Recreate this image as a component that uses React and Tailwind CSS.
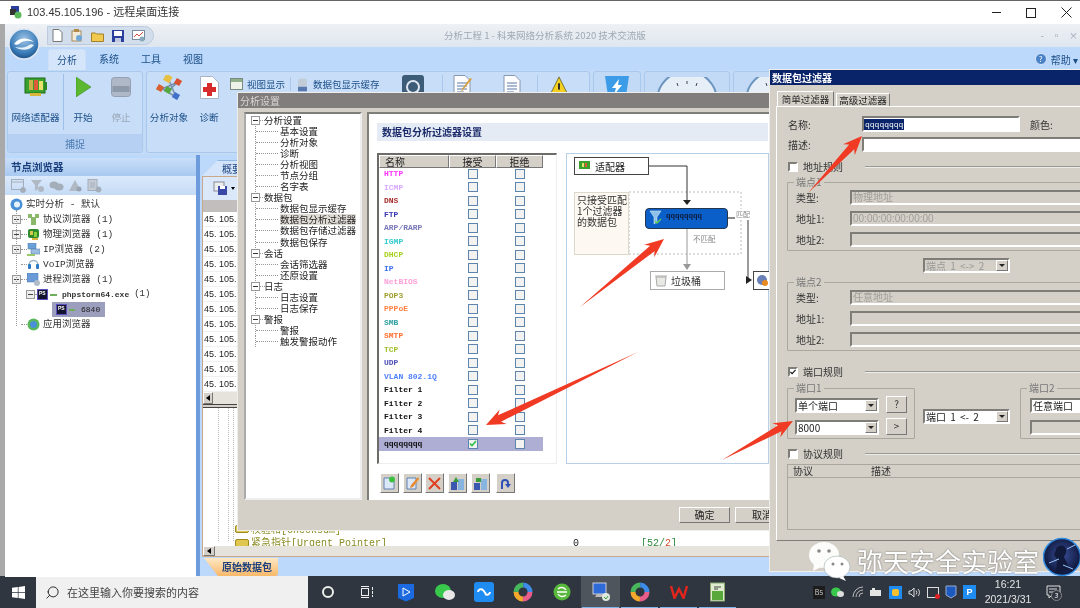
import React from "react";
import { Search } from "lucide-react";

const mono = "font-['Liberation_Mono','Noto_Sans_CJK_SC',monospace]";
const sunken = "border-2 border-t-[#7f7d78] border-l-[#7f7d78] border-b-white border-r-white";
const raised = "border border-t-white border-l-white border-b-[#777] border-r-[#777]";

function Orb() {
  return (
    <svg width="32" height="32" viewBox="0 0 32 32">
      <defs>
        <radialGradient id="orb" cx="50%" cy="35%" r="65%">
          <stop offset="0%" stopColor="#9fc4e6" />
          <stop offset="70%" stopColor="#3a7cb8" />
          <stop offset="100%" stopColor="#1d4f86" />
        </radialGradient>
      </defs>
      <circle cx="16" cy="16" r="15" fill="url(#orb)" stroke="#dfe8f2" strokeWidth="1.5" />
      <path d="M6 16c5-7 14-7 20-2-6-2-11-2-15 2-2 1-3 1-5 0z" fill="#fff" />
      <path d="M26 17c-5 6-13 6-19 2 6 1 10 1 14-2 2-1 3-1 5 0z" fill="#e8f2fb" />
    </svg>
  );
}

function QuickIcons() {
  return (
    <div className="flex items-center gap-[8px] h-[19px] w-[107px] pl-[4px] rounded-r-[10px] bg-[#d2deec] border border-[#bccbde]">
      <svg width="11" height="13" viewBox="0 0 11 13"><path d="M1 .5h6l3 3v9H1z" fill="#fff" stroke="#777" /></svg>
      <svg width="12" height="13" viewBox="0 0 12 13"><rect x="1" y="2" width="9" height="10" fill="#f2ead8" stroke="#a98a5c" /><rect x="3" y="0" width="5" height="3" fill="#b48a4a" /><circle cx="8" cy="9" r="3" fill="#6fa6d8" /></svg>
      <svg width="13" height="12" viewBox="0 0 13 12"><path d="M.5 3h4l1 1h7v7.500h-12z" fill="#f0c94e" stroke="#a4812a" /></svg>
      <svg width="12" height="12" viewBox="0 0 12 12"><rect width="12" height="12" fill="#2a3f9e" /><rect x="2" y="1" width="8" height="5" fill="#fff" /><rect x="3" y="8" width="6" height="4" fill="#c2c8e0" /></svg>
      <svg width="13" height="12" viewBox="0 0 13 12"><rect x=".5" y=".5" width="12" height="9" fill="#fff" stroke="#7a8aa0" /><path d="M2 7l3-3 2 2 4-4" stroke="#d24a3a" fill="none" /><circle cx="10" cy="9" r="2.500" fill="#8ab" /></svg>
    </div>
  );
}

function RibbonBtn({ icon, label, muted, w }) {
  return (
    <div className={`flex flex-col items-center ${w}`}>
      <div className="h-[26px] flex items-center justify-center">{icon}</div>
      <div className={`mt-[10px] text-[9.6px] leading-[14px] whitespace-nowrap ${muted ? "text-[#9aa6b4]" : "text-[#1c4f88]"}`}>{label}</div>
    </div>
  );
}

const nicIcon = (
  <svg width="24" height="21" viewBox="0 0 24 21">
    <rect x="1" y="1" width="20" height="15" fill="#3aa12c" stroke="#1f6a1a" />
    <rect x="5" y="3" width="4" height="10" fill="#c8b24a" />
    <rect x="10" y="3" width="4" height="10" fill="#e05a3a" />
    <rect x="15" y="4" width="4" height="9" fill="#e8e06a" />
    <rect x="21" y="5" width="2" height="8" fill="#2f8a26" />
    <rect x="6" y="16" width="11" height="3" fill="#d8b43a" />
  </svg>
);
const playIcon = <svg width="15" height="20" viewBox="0 0 15 20"><path d="M0 0l15 10L0 20z" fill="#5bb82f" stroke="#3d8f1e" strokeWidth=".6" /></svg>;
const stopIcon = (
  <svg width="20" height="20" viewBox="0 0 20 20">
    <rect x=".5" y=".5" width="19" height="19" rx="3" fill="#aeb8c6" stroke="#94a0b0" />
    <rect x="1.500" y="9" width="17" height="6" fill="#8d98a8" />
  </svg>
);
const nodesIcon = (
  <svg width="27" height="25" viewBox="0 0 27 25">
    <path d="M5 13L20 22M12 3L20 22M22 7L6 14M22 7L12 16" stroke="#7890a8" strokeWidth="1.500" />
    <rect x="8.500" y="0" width="7" height="7" transform="rotate(30 12 3)" fill="#e8c040" />
    <rect x="19" y="4" width="6" height="6" transform="rotate(30 22 7)" fill="#d85030" />
    <rect x="1" y="10" width="6" height="6" transform="rotate(30 4 13)" fill="#d86030" />
    <rect x="9" y="12" width="6" height="6" transform="rotate(30 12 15)" fill="#58a840" />
    <rect x="17" y="18" width="6" height="6" transform="rotate(30 20 21)" fill="#4070c8" />
  </svg>
);
const diagIcon = (
  <svg width="19" height="23" viewBox="0 0 19 23">
    <path d="M.5.5h12l6 6v16H.5z" fill="#fff" stroke="#a8b4c4" />
    <path d="M7 7h5v4h4v5h-4v4H7v-4H3v-5h4z" fill="#d82c2c" />
  </svg>
);

function MiniDoc({ pen }) {
  return (
    <svg width="22" height="22" viewBox="0 0 22 22">
      <path d="M3 .5h11l5 5v16H3z" fill="#fdfdff" stroke="#8898b0" />
      <path d="M6 8h10M6 11h10M6 14h10M6 17h7" stroke="#5878a8" />
      {pen && <path d="M21 4L12 15l-2 2 1-3 8-11z" fill="#d8a040" />}
    </svg>
  );
}

function Gauge() {
  return (
    <svg width="64" height="22" viewBox="0 0 64 22">
      <path d="M2 24A30 30 0 0 1 62 24" fill="#e6eef8" stroke="#6c96c0" strokeWidth="2" />
      <path d="M32 4v3M22 6l1 3M42 6l-1 3" stroke="#444" />
    </svg>
  );
}

function Ribbon() {
  return (
    <div className="h-[85px] flex gap-[3px] pl-[2px] pt-[1px] bg-[#c3daf7] overflow-hidden">
      <div className="w-[136px] h-[82px] shrink-0 flex flex-col rounded-[3px] border border-[#a9c8ee] bg-[#c7ddf8]">
        <div className="flex h-[62px] pt-[2px]">
          <RibbonBtn w="w-[55px]" icon={nicIcon} label="网络适配器" />
          <div className="w-px h-[56px] bg-[#9fc0e8]" />
          <RibbonBtn w="w-[38px]" icon={playIcon} label="开始" />
          <RibbonBtn w="w-[38px]" icon={stopIcon} label="停止" muted />
        </div>
        <div className="h-[18px] flex-1 bg-[#b5d0f2] text-center text-[#4a79b0] text-[10px] leading-[20px]">捕捉</div>
      </div>
      <div className="w-[444px] h-[82px] shrink-0 flex rounded-[3px] border border-[#a9c8ee] bg-[#c7ddf8] pt-[2px]">
        <RibbonBtn w="w-[44px] shrink-0" icon={nodesIcon} label="分析对象" />
        <RibbonBtn w="w-[36px] shrink-0" icon={diagIcon} label="诊断" />
        <div className="flex items-start ml-[3px] mt-[3px] text-[#1c4f88] text-[9.5px] leading-[14px]">
          <svg className="mt-px" width="13" height="12" viewBox="0 0 13 12"><rect x=".5" y=".5" width="12" height="11" fill="#eef3ea" stroke="#7a8a80" /><rect x="1" y="1" width="11" height="3" fill="#8fb08a" /></svg>
          <span className="ml-[4px] w-[40px] whitespace-nowrap">视图显示</span>
          <div className="ml-[3px] w-px h-[14px] bg-[#aac8ec]" />
          <svg className="ml-[7px] mt-px" width="9" height="14" viewBox="0 0 10 14"><rect width="10" height="14" rx="2" fill="#c0ccd8" /><rect y="9" width="10" height="5" fill="#5878b0" /></svg>
          <span className="ml-[6px] w-[71px] whitespace-nowrap">数据包显示缓存</span>
        </div>
        <div className="ml-[18px] mt-[1px] flex gap-[18px]">
          <div className="w-[22px] h-[24px] rounded-[3px] bg-[#3c5c78] flex justify-center pt-[5px]"><div className="w-[14px] h-[14px] rounded-full border-2 border-[#dfe8f2]" /></div>
          <div className="flex gap-[28px] pl-[8px] border-l border-[#a9c8ee]"><MiniDoc pen /><MiniDoc /></div>
          <div className="-ml-[4px] pl-[11px] border-l border-[#a9c8ee]">
            <svg width="20" height="22" viewBox="0 0 22 22"><path d="M11 1l10 20H1z" fill="#f4d020" stroke="#6a6a30" /><rect x="10" y="8" width="2" height="7" fill="#222" /></svg>
          </div>
        </div>
      </div>
      <div className="w-[48px] h-[82px] shrink-0 rounded-[3px] border border-[#a9c8ee] flex justify-center pt-[3px]">
        <svg width="26" height="24" viewBox="0 0 26 24"><path d="M1 1h24l-3 20-9 3-9-3z" fill="#3c9ce8" /><path d="M15 4l-7 9h4l-2 7 8-10h-4z" fill="#fff" /></svg>
      </div>
      <div className="w-[86px] h-[82px] shrink-0 rounded-[3px] border border-[#a9c8ee] flex justify-center pt-[5px]"><Gauge /></div>
      <div className="w-[86px] h-[82px] shrink-0 rounded-[3px] border border-[#a9c8ee] flex justify-center pt-[5px]"><Gauge /></div>
    </div>
  );
}

const treeIcons = {
  proto: <svg className="shrink-0" width="13" height="13" viewBox="0 0 13 13"><path d="M1 1h4v3h3V1h4v4H9v7H4V5H1z" fill="#8ab86a" /></svg>,
  phys: <svg className="shrink-0" width="13" height="13" viewBox="0 0 13 13"><rect x="1" y="1" width="11" height="9" rx="2" fill="#2e8a2e" /><rect x="3" y="3" width="3" height="4" fill="#d8c84a" /><rect x="7" y="4" width="3" height="5" fill="#8ad03a" /><rect x="5" y="10" width="6" height="2" fill="#d8b43a" /></svg>,
  ip: <svg className="shrink-0" width="13" height="13" viewBox="0 0 13 13"><rect x="1" y="0" width="8" height="6" fill="#6aa0d8" stroke="#4a78a8" strokeWidth=".5" /><rect x="4" y="6" width="9" height="5" fill="#9abde0" stroke="#4a78a8" strokeWidth=".5" /><path d="M0 12h8" stroke="#9ac86a" strokeWidth="2" /></svg>,
  voip: <svg className="shrink-0" width="13" height="13" viewBox="0 0 13 13"><path d="M2 7a4.500 4.500 0 0 1 9 0" fill="none" stroke="#9ab0c8" strokeWidth="1.300" /><rect x="1" y="6" width="3" height="5" rx="1" fill="#2e78c8" /><rect x="9" y="6" width="3" height="5" rx="1" fill="#2e78c8" /></svg>,
  proc: <svg className="shrink-0" width="13" height="13" viewBox="0 0 13 13"><rect x="0" y="0" width="11" height="9" fill="#6a9ad8" stroke="#4a78a8" strokeWidth=".5" /><circle cx="10" cy="10" r="3" fill="#b0bcc8" /></svg>,
  app: <svg className="shrink-0" width="13" height="13" viewBox="0 0 13 13"><circle cx="6.500" cy="6.500" r="6" fill="#5ab85a" /><circle cx="6.500" cy="6.500" r="3.500" fill="#4a90d8" /></svg>,
};

function NodeTree() {
  const Box = () => (
    <span className="w-[9px] h-[9px] shrink-0 border border-[#9a9a9a] bg-[#eee] flex items-center justify-center">
      <span className="w-[5px] h-px bg-[#444]" />
    </span>
  );
  const Dash = ({ w }) => <span className={`${w} shrink-0 border-t border-dotted border-[#999]`} />;
  const Ps = () => (
    <span className="w-[11px] h-[11px] shrink-0 bg-[#14142e] border border-[#5a50c0] text-white text-[5px] leading-[7px] font-bold pl-px font-['Liberation_Sans',sans-serif]">PS</span>
  );
  const Row = ({ icon, box, children }) => (
    <div className={`flex items-center h-[15px] pl-[7px] whitespace-nowrap text-[9.5px] leading-[15px] ${mono} text-[#333]`}>
      {box ? <Box /> : <span className="w-[9px] flex"><span className="ml-[4px]"><Dash w="w-[5px]" /></span></span>}
      <Dash w="w-[6px]" />
      {icon}
      <span className="ml-[3px]">{children}</span>
    </div>
  );
  return (
    <div className="relative flex-1 bg-white pt-[2px]">
      <div className="absolute left-[11px] top-[15px] h-[116px] border-l border-dotted border-[#999]" />
      <div className="flex items-center h-[15px] pl-[5px] text-[9.5px] leading-[15px] text-[#333]">
        <svg width="13" height="13" viewBox="0 0 13 13"><circle cx="6.500" cy="6.500" r="6" fill="#4a90d8" /><circle cx="7" cy="6.500" r="3" fill="#e8f2fb" /></svg>
        <span className={`ml-[3px] ${mono}`}>实时分析 - 默认</span>
      </div>
      <Row box icon={treeIcons.proto}>协议浏览器 (1)</Row>
      <Row box icon={treeIcons.phys}>物理浏览器 (1)</Row>
      <Row box icon={treeIcons.ip}>IP浏览器 (2)</Row>
      <Row icon={treeIcons.voip}>VoIP浏览器</Row>
      <Row box icon={treeIcons.proc}>进程浏览器 (1)</Row>
      <div className={`flex items-center h-[15px] pl-[21px] whitespace-nowrap text-[8px] leading-[15px] ${mono} text-[#333]`}>
        <Box />
        <Dash w="w-[2px]" />
        <Ps />
        <span className="w-[7px] h-[2px] ml-[2px] bg-[#6fae5a]" />
        <span className="ml-[5px] font-bold">phpstorm64.exe</span>
        <span className="ml-[5px] text-[9px]">(1)</span>
      </div>
      <div className="flex items-center h-[15px] pl-[47px]">
        <div className={`flex items-center h-[15px] w-[53px] pl-[4px] bg-[#9c9ebe] text-[8px] ${mono} text-[#222]`}>
          <Ps />
          <span className="w-[6px] h-[2px] ml-[2px] bg-[#6fae5a]" />
          <span className="ml-[6px]">6840</span>
        </div>
      </div>
      <Row icon={treeIcons.app}>应用浏览器</Row>
    </div>
  );
}

function LeftPanel() {
  return (
    <div className="w-[191px] h-[419px] mt-[3px] flex flex-col">
      <div className="h-[18px] pl-[6px] bg-gradient-to-b from-[#c9def8] to-[#a9c9f0] text-[#1a3f7c] font-bold text-[10.5px] leading-[17px]">节点浏览器</div>
      <div className="h-[19px] pl-[6px] flex items-center gap-[4px] bg-gradient-to-b from-[#dbe9fb] to-[#c5dbf6] text-[#a4aeba]">
        <svg width="15" height="14" viewBox="0 0 15 14" fill="none" stroke="#a4aeba"><rect x=".5" y=".5" width="12" height="10" /><path d="M.5 3h12" /><circle cx="12" cy="11" r="2.500" fill="#a4aeba" /></svg>
        <svg width="15" height="14" viewBox="0 0 15 14" fill="#b0b8c4"><path d="M1 1h11L8 6v4L5 12V6z" /><circle cx="11" cy="10" r="3" /></svg>
        <svg width="15" height="14" viewBox="0 0 15 14" fill="#a4aeba"><ellipse cx="5" cy="6" rx="4.500" ry="3.500" /><ellipse cx="10" cy="8" rx="4.500" ry="3.500" /></svg>
        <svg width="15" height="14" viewBox="0 0 15 14" fill="#b0b8c4"><path d="M7 1l6 11H1z" /><circle cx="11" cy="10" r="2.500" fill="#98a2b0" /></svg>
        <svg width="15" height="14" viewBox="0 0 15 14" fill="none" stroke="#a4aeba"><rect x="1" y=".5" width="9" height="11" fill="#c6ccd6" /><path d="M3 4h5M3 6h5M3 8h5" /><circle cx="11.500" cy="10.500" r="2.500" fill="#a4aeba" /></svg>
      </div>
      <NodeTree />
    </div>
  );
}

function RightPanel() {
  const rows = Array.from({ length: 12 });
  return (
    <div className="flex-1 flex flex-col pl-[2px]">
      <div className="h-[21px] pt-[5px] flex">
        <div className="w-[60px] h-[16px] pl-[20px] rounded-t-[3px] bg-[#d4e5fb] border-t border-[#8fb5e4] text-[#1a3f7c] text-[10px] leading-[16px] [clip-path:polygon(16px_0,100%_0,100%_100%,0_100%)]">概要</div>
      </div>
      <div className="h-[381px] flex flex-col border border-[#c8a888] bg-white">
        <div className="h-[23px] flex items-center pl-[10px] bg-[#dbe8f9]">
          <svg width="17" height="15" viewBox="0 0 17 15"><rect x="1" y="1" width="10" height="9" fill="#eee" stroke="#889" /><rect x="5" y="5" width="9" height="9" fill="#3a48a8" /><rect x="7" y="5" width="5" height="3" fill="#fff" /></svg>
          <span className="ml-[1px] w-0 h-0 border-x-[2px] border-t-[3px] border-x-transparent border-t-black" />
        </div>
        <div className="h-[12px] bg-[#c2bebe]" />
        {rows.map((_, i) => (
          <div key={i} className="h-[15px] pl-[1px] border-b border-[#f0f0f0] text-[9px] leading-[14px] text-[#222] font-['Liberation_Sans',sans-serif] whitespace-nowrap">45. 105.</div>
        ))}
        <div className="h-[12px] flex bg-[#e6e3dd]">
          <div className={`w-[10px] bg-[#d4d0c8] ${raised} flex items-center justify-center`}>
            <span className="w-0 h-0 border-y-[3px] border-r-[4px] border-y-transparent border-r-black" />
          </div>
        </div>
        <div className="h-[4px] border-y border-[#444] bg-[#d4d0c8]" />
        <div className="flex-1 flex flex-col justify-end relative min-h-0 overflow-hidden">
          <div className="absolute left-[15px] top-0 bottom-[5px] border-l border-dotted border-[#bbb]" />
          <div className="absolute left-[25px] top-0 bottom-[5px] border-l border-dotted border-[#bbb]" />
          <div className="absolute left-[30px] top-0 bottom-[5px] border-l border-dotted border-[#bbb]" />
          <div className={`h-[11px] -mb-[3px] flex flex-col gap-[2px] text-[10px] leading-[11px] text-[#8a8c24] pl-[32px] whitespace-nowrap ${mono}`}>
            <div className="flex -mt-[13px]">
              <span className="w-[14px] h-[8px] rounded-[2px] bg-[#e0c850] border border-[#a08a20]" />
              <span className="ml-[2px] w-[322px]">校验和[Checksum]</span>
            </div>
            <div className="flex">
              <span className="w-[14px] h-[8px] mt-[1px] rounded-[2px] bg-[#e0c850] border border-[#a08a20]" />
              <span className="ml-[2px] w-[322px]">紧急指针[Urgent Pointer]</span>
              <span className="text-[#222] w-[68px]">0</span>
              <span className="text-[#2a8a3a]">[52/<span className="text-[#d05030]">2</span>]</span>
            </div>
          </div>
        </div>
        <div className="h-[10px] relative flex bg-[#e6e3dd]">
          <div className={`w-[12px] bg-[#d4d0c8] ${raised} flex items-center justify-center`}>
            <span className="w-0 h-0 border-y-[3px] border-r-[4px] border-y-transparent border-r-black" />
          </div>
        </div>
      </div>
      <div className="flex-1 pl-[2px] pt-[1px]">
        <div className="w-[74px] h-[18px] pl-[18px] bg-gradient-to-b from-[#fde8c4] to-[#f8b868] text-[#1a3f7c] font-bold text-[10px] leading-[17px] rounded-br-[3px] [clip-path:polygon(0_0,100%_0,100%_100%,14px_100%)]">原始数据包</div>
      </div>
    </div>
  );
}

const settingsTree = [
  [0, "分析设置"], [1, "基本设置"], [1, "分析对象"], [1, "诊断"], [1, "分析视图"], [1, "节点分组"], [1, "名字表"],
  [0, "数据包"], [1, "数据包显示缓存"], [1, "数据包分析过滤器", true], [1, "数据包存储过滤器"], [1, "数据包保存"],
  [0, "会话"], [1, "会话筛选器"], [1, "还原设置"],
  [0, "日志"], [1, "日志设置"], [1, "日志保存"],
  [0, "警报"], [1, "警报"], [1, "触发警报动作"],
];

const filters = [
  ["HTTP", "#ff33ff"], ["ICMP", "#d9a9ff"], ["DNS", "#a83030"], ["FTP", "#3838b0"], ["ARP/RARP", "#7a78b8"],
  ["IGMP", "#33cccc"], ["DHCP", "#a8d020"], ["IP", "#3a70f0"], ["NetBIOS", "#ffa0d8"], ["POP3", "#a0a030"],
  ["PPPoE", "#ff8040"], ["SMB", "#30a0a0"], ["SMTP", "#ff7030"], ["TCP", "#a0c030"], ["UDP", "#5050b8"],
  ["VLAN 802.1Q", "#5080ff"], ["Filter 1", "#111"], ["Filter 2", "#111"], ["Filter 3", "#111"], ["Filter 4", "#111"],
  ["qqqqqqqq", "#111", true],
];

function Check({ on }) {
  return (
    <span className="w-[10px] h-[10px] border-[1.5px] border-[#5c84ac] bg-[#f2f2f0] flex items-center justify-center">
      {on && <svg width="8" height="7" viewBox="0 0 8 7"><path d="M1 3.500l2 2 4-4.500" stroke="#2fc04a" strokeWidth="1.600" fill="none" /></svg>}
    </span>
  );
}

function FilterTable() {
  return (
    <div className="w-[180px] h-[311px] shrink-0 bg-white border-t-2 border-l-2 border-[#6e6c68] border-b border-r border-b-[#eee] border-r-[#eee]">
      <div className="grid grid-cols-[70px_47px_47px] w-[164px] h-[12px] text-[10px] leading-[11px] text-[#222]">
        <div className={`pl-[5px] bg-[#d4d0c8] ${raised}`}>名称</div>
        <div className={`text-center bg-[#d4d0c8] ${raised}`}>接受</div>
        <div className={`text-center bg-[#d4d0c8] ${raised}`}>拒绝</div>
      </div>
      {filters.map(([name, color, sel]) => (
        <div key={name} className={`grid grid-cols-[70px_47px_47px] w-[164px] h-[13.5px] items-center ${sel ? "bg-[#aeaed4]" : ""}`}>
          <span className={`pl-[5px] text-[8px] leading-[13px] ${mono} font-bold whitespace-nowrap`} style={{ color }}>{name}</span>
          <span className="flex justify-center"><Check on={sel} /></span>
          <span className="flex justify-center"><Check /></span>
        </div>
      ))}
    </div>
  );
}

function FilterDiagram() {
  return (
    <div className="relative w-[203px] h-[311px] bg-white border border-[#b8cfe8] shrink-0">
      <svg className="absolute left-0 top-0" width="203" height="150" viewBox="0 0 203 150">
        <rect x="62" y="38" width="112" height="62" fill="none" stroke="#bbb" strokeDasharray="2 2" />
        <path d="M82 12h38v38" fill="none" stroke="#333" />
        <path d="M116 46h8l-4 5z" fill="#222" />
        <path d="M120 75v39" fill="none" stroke="#999" />
        <path d="M116 110h8l-4 6z" fill="#999" />
        <path d="M161 64h20v62" fill="none" stroke="#666" strokeWidth="1.300" />
        <path d="M179 122v8l6-4z" fill="#222" />
      </svg>
      <div className="absolute left-[7px] top-[3px] w-[75px] h-[18px] bg-white border border-[#444] flex items-center pl-[4px] text-[10px] text-[#222]">
        <svg width="12" height="10" viewBox="0 0 12 10"><rect x="0" y="0" width="11" height="8" fill="#3aa12c" /><rect x="3" y="2" width="2" height="4" fill="#e8e06a" /><rect x="6" y="2" width="2" height="4" fill="#e05a3a" /></svg>
        <span className="ml-[4px]">适配器</span>
      </div>
      <div className="absolute left-[7px] top-[38px] w-[55px] h-[63px] bg-[#fdf9f2] border border-[#ddd8cc] pl-[2px] pt-[1px] text-[10px] leading-[11px] text-[#333]">只接受匹配<br />1个过滤器<br />的数据包</div>
      <div className="absolute left-[78px] top-[54px] w-[83px] h-[21px] rounded-[4px] bg-[#0b5fc9] border border-[#23364e] flex items-start pl-[3px] pt-[1px]">
        <svg width="13" height="15" viewBox="0 0 13 15"><path d="M1 1h11L8 7v5l-3 2V7z" fill="#8fc0e8" stroke="#e8f2fb" strokeWidth=".5" /><path d="M6 11l2 2 4-4" stroke="#5fd050" fill="none" strokeWidth="1.300" /></svg>
        <span className={`ml-[4px] mt-[1px] text-[7.5px] font-bold text-[#0c1c3c] ${mono}`}>qqqqqqqq</span>
      </div>
      <span className="absolute left-[126px] top-[79px] text-[7.5px] text-[#888]">不匹配</span>
      <span className="absolute left-[168px] top-[55px] px-px bg-white text-[7px] text-[#888]">匹配</span>
      <div className="absolute left-[83px] top-[117px] w-[75px] h-[19px] bg-white border border-[#aaa] flex items-center pl-[4px] text-[10px] text-[#333]">
        <svg width="12" height="13" viewBox="0 0 12 13"><path d="M1 3h10l-1 9H2z" fill="#e8e8e4" stroke="#aaa" /><path d="M0 2h12" stroke="#aaa" /></svg>
        <span className="ml-[4px]">垃圾桶</span>
      </div>
      <div className="absolute left-[186px] top-[117px] w-[20px] h-[19px] bg-white border border-[#444] pl-[2px] pt-[2px]">
        <svg width="13" height="13" viewBox="0 0 13 13"><circle cx="6" cy="6" r="5" fill="#6a80b8" /><circle cx="9" cy="9" r="3" fill="#e88a20" /></svg>
      </div>
    </div>
  );
}

function ToolBtn({ children, ml }) {
  return <div className={`w-[19px] h-[20px] ${ml} flex items-center justify-center bg-[#d4d0c8] ${raised}`}>{children}</div>;
}

function SettingsDialog() {
  return (
    <div className="absolute left-[237px] top-[92px] w-[540px] h-[439px] flex flex-col bg-[#d4d0c8] border border-[#efeeea]">
      <div className="h-[15px] pl-[2px] bg-[#807d7c] text-[#d8d6d2] text-[10px] leading-[15px]">分析设置</div>
      <div className="flex mt-[4px] ml-[6px] gap-[5px]">
        <div className="w-[118px] h-[388px] bg-white border-2 border-t-[#7f7d78] border-l-[#aaa] border-r-[#eee] border-b-[#eee] pt-[1px] overflow-hidden">
          {settingsTree.map(([lvl, text, sel], i) => (
            <div key={i} className="flex items-center h-[11.05px] pl-[5px] text-[9.5px] leading-[11px] text-[#222] whitespace-nowrap">
              {lvl === 0 ? (
                <>
                  <span className="w-[9px] h-[9px] shrink-0 border border-[#999] flex items-center justify-center"><span className="w-[5px] h-px bg-[#333]" /></span>
                  <span className="w-[5px] border-t border-dotted border-[#999]" />
                  <span className="-ml-[1px]">{text}</span>
                </>
              ) : (
                <>
                  <span className="ml-[4px] w-[25px] h-full shrink-0 border-l border-dotted border-[#999] flex items-center">
                    <span className="w-[22px] border-t border-dotted border-[#999]" />
                  </span>
                  <span className={`${sel ? "bg-[#dfdcd6]" : ""}`}>{text}</span>
                </>
              )}
            </div>
          ))}
        </div>
        <div className="w-[404px] h-[388px] bg-white border-l-2 border-t-2 border-l-[#7f7d78] border-t-[#7f7d78] pl-[8px] pt-[9px]">
          <div className="h-[18px] w-[391px] pl-[5px] bg-[#e4ebf4] text-[#1a2a6a] font-bold text-[10px] leading-[17px]">数据包分析过滤器设置</div>
          <div className="flex mt-[12px] gap-[9px]">
            <FilterTable />
            <FilterDiagram />
          </div>
          <div className="flex mt-[9px] ml-[3px] gap-[3px]">
            <ToolBtn><svg width="13" height="14" viewBox="0 0 13 14"><path d="M1 2h7l3 3v8H1z" fill="#dbe8f8" stroke="#6080b0" /><circle cx="9" cy="3.500" r="3" fill="#3cc040" /></svg></ToolBtn>
            <ToolBtn ml="ml-[1px]"><svg width="13" height="14" viewBox="0 0 13 14"><path d="M1 2h9v11H1z" fill="#dbe8f8" stroke="#6080b0" /><path d="M12 1L5 9l-1 3 3-1 6-8z" fill="#e88a30" /></svg></ToolBtn>
            <ToolBtn><svg width="13" height="13" viewBox="0 0 13 13"><path d="M1 1l11 11M12 1L1 12" stroke="#e04020" strokeWidth="2" /></svg></ToolBtn>
            <ToolBtn ml="ml-px"><svg width="15" height="15" viewBox="0 0 15 15"><rect x="1" y="6" width="6" height="8" fill="#3a58b0" /><rect x="8" y="3" width="6" height="11" fill="#88b4e0" /><path d="M3 6l3-5 3 5z" fill="#3a9a3a" /></svg></ToolBtn>
            <ToolBtn ml="ml-px"><svg width="15" height="15" viewBox="0 0 15 15"><rect x="1" y="7" width="6" height="7" fill="#3a58b0" /><rect x="8" y="3" width="6" height="11" fill="#88b4e0" /><path d="M3 2h5v4H3z" fill="#3a9a3a" /></svg></ToolBtn>
            <ToolBtn ml="ml-[3px]"><svg width="13" height="13" viewBox="0 0 13 13"><path d="M3 12V6a3 3 0 0 1 6 0v3" fill="none" stroke="#3050b8" strokeWidth="2" /><path d="M6 7l3 4 3-4z" fill="#3050b8" /></svg></ToolBtn>
          </div>
        </div>
      </div>
      <div className="flex justify-end mt-[7px] gap-[5px]">
        <div className={`w-[51px] h-[16px] text-center text-[10px] leading-[14px] text-[#222] ${raised}`}>确定</div>
        <div className={`w-[41px] h-[16px] pl-[16px] text-[10px] leading-[14px] text-[#222] ${raised}`}>取消</div>
      </div>
    </div>
  );
}

function Field({ label, value, mt }) {
  return (
    <div className={`flex items-center h-[15px] ${mt}`}>
      <span className="w-[54px] shrink-0 text-[10px] leading-[15px] text-[#333] whitespace-nowrap">{label}</span>
      <div className={`w-[260px] h-[15px] shrink-0 ${sunken} pl-[1px] text-[10px] leading-[11px] text-[#a09e98] whitespace-nowrap font-['Liberation_Sans','Noto_Sans_CJK_SC',sans-serif]`}>{value}</div>
    </div>
  );
}

function Group({ legend, className, children }) {
  return (
    <div className={`relative shrink-0 border border-[#aaa79f] rounded-[1px] ${className}`}>
      <span className="absolute left-[6px] -top-[7px] px-[2px] bg-[#d4d0c8] text-[10px] leading-[12px] text-[#777]">{legend}</span>
      {children}
    </div>
  );
}

function Combo({ value, w, gray }) {
  return (
    <div className={`${w} h-[15px] shrink-0 ${sunken} flex items-center bg-white`}>
      <span className={`flex-1 pl-[1px] text-[10px] leading-[11px] whitespace-nowrap [word-spacing:2px] ${gray ? "text-[#999] bg-[#d4d0c8]" : "text-[#222]"}`}>{value}</span>
      <span className={`w-[12px] h-[11px] shrink-0 bg-[#d4d0c8] ${raised} flex items-center justify-center`}>
        <span className="w-0 h-0 border-x-[3px] border-t-[3px] border-x-transparent border-t-[#222]" />
      </span>
    </div>
  );
}

function RuleCheck({ label, on, mt }) {
  return (
    <div className={`flex items-center h-[10px] ${mt}`}>
      <span className={`w-[10px] h-[10px] shrink-0 ${sunken} bg-white flex items-center justify-center`}>
        {on && <svg width="7" height="6" viewBox="0 0 7 6"><path d="M.5 3l2 2 4-4.500" stroke="#111" strokeWidth="1.300" fill="none" /></svg>}
      </span>
      <span className="ml-[5px] w-[62px] shrink-0 text-[10px] leading-[12px] text-[#333] whitespace-nowrap">{label}</span>
      <span className="w-[220px] h-[2px] border-t border-[#9a9892] border-b-0 bg-white/60" />
    </div>
  );
}

function FilterDialog() {
  return (
    <div className="absolute left-[769px] top-[69px] w-[330px] h-[503px] flex flex-col bg-[#d4d0c8] border border-[#efeeea]">
      <div className="h-[15px] pl-[2px] bg-[#0a246a] text-white font-bold text-[10px] leading-[15px]">数据包过滤器</div>
      <div className="relative z-10 flex h-[15px] mt-[6px] ml-[7px] text-[9.5px] text-[#222]">
        <div className="w-[57px] leading-[14px] text-center border-t border-l border-white border-r border-r-[#777] bg-[#d4d0c8]">简单过滤器</div>
        <div className="w-[54px] h-[13px] mt-[2px] ml-[2px] leading-[12px] text-center border-t border-l border-white border-r border-r-[#777]">高级过滤器</div>
      </div>
      <div className="ml-[6px] h-[435px] border-t border-l border-white border-b border-b-[#807d78] pl-[10px] pt-[9px]">
        <div className="flex items-center h-[16px]">
          <span className="w-[75px] pl-[1px] text-[10px] leading-[15px] text-[#333]">名称:</span>
          <div className={`w-[158px] h-[16px] ${sunken} bg-white flex items-center`}>
            <span className={`bg-[#0a246a] text-white text-[8px] leading-[11px] px-[1px] ${mono}`}>qqqqqqqq</span>
          </div>
          <span className="ml-[10px] text-[10px] leading-[15px] text-[#333]">颜色:</span>
        </div>
        <div className="flex items-center h-[15px] mt-[5px]">
          <span className="w-[75px] pl-[1px] text-[10px] leading-[15px] text-[#333]">描述:</span>
          <div className={`w-[230px] h-[15px] ${sunken} bg-white`} />
        </div>
        <RuleCheck label="地址规则" mt="mt-[10px] ml-[1px]" />
        <Group legend="端点1" className="w-[300px] h-[69px] mt-[10px] pl-[8px] pt-[7px]">
          <Field label="类型:" value="物理地址" />
          <Field label="地址1:" value="00:00:00:00:00:00" mt="mt-[6px]" />
          <Field label="地址2:" mt="mt-[6px]" />
        </Group>
        <div className="ml-[136px] mt-[7px]"><Combo value="端点 1 <-> 2" w="w-[87px]" gray /></div>
        <Group legend="端点2" className="w-[300px] h-[69px] mt-[9px] pl-[8px] pt-[7px]">
          <Field label="类型:" value="任意地址" />
          <Field label="地址1:" mt="mt-[6px]" />
          <Field label="地址2:" mt="mt-[6px]" />
        </Group>
        <RuleCheck label="端口规则" on mt="mt-[16px] ml-[1px]" />
        <div className="flex mt-[11px] h-[51px]">
          <Group legend="端口1" className="w-[128px] h-[51px] pl-[7px] pt-[9px]">
            <div className="flex">
              <Combo value="单个端口" w="w-[84px]" />
              <div className={`ml-[7px] -mt-[2px] w-[21px] h-[17px] shrink-0 text-center text-[10px] leading-[14px] text-[#333] ${raised}`}>?</div>
            </div>
            <div className="flex mt-[7px]">
              <Combo value="8000" w="w-[84px]" />
              <div className={`ml-[7px] -mt-[2px] w-[21px] h-[17px] shrink-0 text-center text-[10px] leading-[14px] text-[#333] ${raised}`}>&gt;</div>
            </div>
          </Group>
          <div className="ml-[8px] mt-[21px] shrink-0"><Combo value="端口 1 <- 2" w="w-[87px]" /></div>
          <Group legend="端口2" className="ml-[10px] w-[128px] h-[51px] pl-[9px] pt-[9px]">
            <Combo value="任意端口" w="w-[84px]" />
            <div className={`mt-[7px] w-[84px] h-[15px] ${sunken}`} />
          </Group>
        </div>
        <RuleCheck label="协议规则" mt="mt-[10px] ml-[1px]" />
        <div className="w-[300px] h-[66px] mt-[5px] border border-[#aaa79f]">
          <div className="flex h-[13px] text-[10px] leading-[12px] text-[#333] border-b border-[#aaa79f]">
            <span className="w-[77px] pl-[5px]">协议</span>
            <span className="pl-[6px]">描述</span>
          </div>
        </div>
      </div>
    </div>
  );
}

function arrowPoints([x0, y0], [x1, y1]) {
  const len = Math.hypot(x1 - x0, y1 - y0);
  const ux = (x1 - x0) / len, uy = (y1 - y0) / len;
  const nx = -uy, ny = ux;
  const at = (back, side) => `${x1 - ux * back + nx * side},${y1 - uy * back + ny * side}`;
  return [`${x0},${y0}`, at(15, 3.5), at(19, 8), `${x1},${y1}`, at(19, -8), at(15, -3.5)].join(" ");
}

function RedArrows() {
  const list = [
    [[808, 193], [862, 136]],
    [[580, 307], [664, 239]],
    [[638, 352], [486, 425]],
    [[722, 460], [793, 421]],
  ];
  return (
    <svg className="absolute left-0 top-0 pointer-events-none" width="1080" height="608" viewBox="0 0 1080 608">
      {list.map(([a, b], i) => (
        <polygon key={i} points={arrowPoints(a, b)} fill="#f03a24" />
      ))}
    </svg>
  );
}

function Watermark() {
  return (
    <div className="absolute left-[806px] top-[541px] w-[274px] h-[40px] flex items-center">
      <svg width="46" height="44" viewBox="0 0 46 44">
        <ellipse cx="18" cy="16" rx="15" ry="13" fill="#fff" fillOpacity=".92" />
        <path d="M8 25l-1 7 8-4z" fill="#fff" fillOpacity=".92" />
        <ellipse cx="31" cy="28" rx="13" ry="11" fill="#fff" stroke="#9aa" strokeWidth=".6" />
        <path d="M37 37l3 5-7-3z" fill="#fff" />
        <circle cx="13" cy="12" r="1.800" fill="#888" /><circle cx="23" cy="12" r="1.800" fill="#888" />
        <circle cx="27" cy="25" r="1.500" fill="#888" /><circle cx="36" cy="25" r="1.500" fill="#888" />
      </svg>
      <span className="ml-[5px] text-[26px] leading-[30px] text-white whitespace-nowrap [text-shadow:0_0_2px_#666]">弥天安全实验室</span>
      <svg className="absolute left-[237px] -top-[4px]" width="38" height="40" viewBox="0 0 38 40">
        <defs>
          <radialGradient id="ava" cx="50%" cy="45%" r="55%">
            <stop offset="0%" stopColor="#3a4f9a" />
            <stop offset="100%" stopColor="#0c1436" />
          </radialGradient>
        </defs>
        <circle cx="19" cy="20" r="18.500" fill="url(#ava)" stroke="#2f8ae0" strokeWidth="1.500" />
        <path d="M14 10c6-4 10 0 9 6l-2 4 6 12-14 4 1-14-3-4z" fill="#111a3a" />
        <path d="M6 26l10-4M24 12l8-4M20 28l10 4" stroke="#9ac8ff" strokeWidth="1" />
      </svg>
    </div>
  );
}

function TaskIcon({ children, active, line }) {
  return (
    <div className={`relative w-[39px] h-full flex items-center justify-center ${active ? "bg-[#4f555c]" : ""}`}>
      {children}
      {line && <span className="absolute left-[1px] right-[1px] bottom-0 h-[1.5px] bg-[#7fb4e8]" />}
    </div>
  );
}

function Spinner() {
  return (
    <svg width="20" height="20" viewBox="0 0 20 20">
      <circle cx="10" cy="10" r="7" fill="none" stroke="#e85d8a" strokeWidth="5" strokeDasharray="11 33" />
      <circle cx="10" cy="10" r="7" fill="none" stroke="#f4a82c" strokeWidth="5" strokeDasharray="11 33" strokeDashoffset="-11" />
      <circle cx="10" cy="10" r="7" fill="none" stroke="#48b85c" strokeWidth="5" strokeDasharray="11 33" strokeDashoffset="-22" />
      <circle cx="10" cy="10" r="7" fill="none" stroke="#3c8ce8" strokeWidth="5" strokeDasharray="11 33" strokeDashoffset="-33" />
    </svg>
  );
}

function Taskbar() {
  return (
    <div className="h-[32px] flex items-center bg-[#2f3640] shrink-0">
      <div className="w-[36px] h-full flex items-center justify-center">
        <svg width="13" height="13" viewBox="0 0 13 13" fill="#fff"><path d="M0 1.800l5.800-.8v5.200H0zM6.500.9L13 0v6.200H6.500zM0 6.900h5.800V12L0 11.200zM6.500 6.900H13V13l-6.500-.9z" /></svg>
      </div>
      <div className="w-[272px] h-full flex items-center pl-[9px] bg-[#f0f0f0] text-[#444] text-[11px]">
        <Search size={15} strokeWidth={1.5} className="text-[#222] -scale-x-100" />
        <span className="ml-[7px]">在这里输入你要搜索的内容</span>
      </div>
      <TaskIcon><span className="w-[12px] h-[12px] rounded-full border-2 border-[#eee]" /></TaskIcon>
      <TaskIcon>
        <svg width="14" height="12" viewBox="0 0 14 12" fill="none" stroke="#eee"><rect x="1.500" y="2.500" width="7" height="7" /><path d="M1 .5h8M1 11.500h8M12.500 1v3M12.500 5v3M12.500 9v2" /></svg>
      </TaskIcon>
      <TaskIcon>
        <svg width="18" height="19" viewBox="0 0 18 19"><path d="M1 1h16v14l-8 3.500L1 15z" fill="#1c6ae0" /><path d="M6 5l7 4-7 4z" fill="none" stroke="#fff" /></svg>
      </TaskIcon>
      <TaskIcon>
        <svg width="20" height="17" viewBox="0 0 20 17"><ellipse cx="8" cy="7" rx="8" ry="7" fill="#38c84c" /><ellipse cx="14" cy="11" rx="6" ry="5" fill="#e8e8e8" /></svg>
      </TaskIcon>
      <TaskIcon>
        <svg width="20" height="20" viewBox="0 0 20 20"><rect width="20" height="20" rx="3" fill="#1e8cf0" /><path d="M4 10a3 3 0 0 1 5-2M16 10a3 3 0 0 1-5 2M9 8l3 4" stroke="#fff" strokeWidth="2" fill="none" /></svg>
      </TaskIcon>
      <TaskIcon><Spinner /></TaskIcon>
      <TaskIcon>
        <svg width="18" height="18" viewBox="0 0 18 18"><circle cx="9" cy="9" r="8.500" fill="#58b83c" /><path d="M4 9h10M5 6a5 5 0 0 1 8 1M13 12a5 5 0 0 1-8-1" stroke="#fff" strokeWidth="1.500" fill="none" /></svg>
      </TaskIcon>
      <TaskIcon active line>
        <svg width="20" height="20" viewBox="0 0 20 20"><rect x="2" y="1" width="13" height="11" fill="#2e6ad8" stroke="#ccd" /><path d="M6 12h6v3H4z" fill="#bbb" /><circle cx="15" cy="15" r="4" fill="#dfe8df" /><path d="M13 15l2 2 2-3" stroke="#3a9a3a" fill="none" /></svg>
      </TaskIcon>
      <TaskIcon line><Spinner /></TaskIcon>
      <TaskIcon line>
        <svg width="18" height="14" viewBox="0 0 18 14"><path d="M1 1l3.500 12L9 4l4.500 9L17 1" fill="none" stroke="#e0261c" strokeWidth="2.500" /></svg>
      </TaskIcon>
      <TaskIcon line>
        <svg width="15" height="20" viewBox="0 0 15 20"><rect x=".5" y="1" width="14" height="18" fill="#dfeccf" stroke="#8aa870" /><rect x="2" y="9" width="11" height="9" fill="#58a83c" /><path d="M4 5h7M4 7h4" stroke="#444" /></svg>
      </TaskIcon>
      <div className="ml-[76px] flex items-center gap-[6px]">
        <span className="w-[12px] h-[13px] bg-[#1c1c1c] text-[#ccc] text-[7px] leading-[13px] text-center">B5</span>
        <svg width="13" height="11" viewBox="0 0 13 11"><ellipse cx="5" cy="5" rx="5" ry="4.500" fill="#38c84c" /><ellipse cx="9.500" cy="7" rx="3.500" ry="3" fill="#ddd" /></svg>
        <svg className="ml-[2px]" width="12" height="12" viewBox="0 0 12 12" fill="none" stroke="#bbb"><path d="M1 11a10 10 0 0 1 10-10M4 11a7 7 0 0 1 7-7M7 11a4 4 0 0 1 4-4" /></svg>
        <svg width="13" height="9" viewBox="0 0 13 9"><rect y="2" width="11" height="6" fill="#e4e4e4" /><rect x="2" width="3" height="2" fill="#e4e4e4" /></svg>
        <span className="w-[13px] h-[13px] bg-[#1e8cf0] flex items-center justify-center"><span className="w-[7px] h-[7px] bg-[#f4c030] rounded-[2px]" /></span>
        <svg width="12" height="11" viewBox="0 0 12 11" fill="none" stroke="#ddd"><path d="M1 4h2l3-3v9L3 7H1zM8 3.500a3 3 0 0 1 0 4M10 2a5 5 0 0 1 0 7" /></svg>
        <span className="relative w-[12px] h-[11px] border border-[#ddd] ml-[1px]"><span className="absolute -right-[2px] -bottom-[2px] w-[5px] h-[5px] rounded-full bg-[#e02020]" /></span>
        <svg width="12" height="14" viewBox="0 0 12 14"><path d="M1 1h10v9l-5 3-5-3z" fill="#1c5ac0" stroke="#9ac" /></svg>
        <span className="w-[13px] h-[14px] bg-[#1e8cf0] text-white text-[9px] leading-[14px] text-center font-['Liberation_Sans',sans-serif] font-bold">P</span>
      </div>
      <div className="ml-[6px] w-[52px] flex flex-col items-center text-[#e4e4e4] text-[10.5px] leading-[15px] font-['Liberation_Sans',sans-serif]">
        <span>16:21</span>
        <span>2021/3/31</span>
      </div>
      <div className="relative ml-[12px]">
        <svg width="15" height="14" viewBox="0 0 15 14" fill="none" stroke="#ddd"><path d="M1 1h13v9H6l-3 3v-3H1z" /><path d="M3 4h8M3 7h6" /></svg>
        <span className="absolute left-[5px] top-[5px] w-[11px] h-[11px] rounded-full bg-[#2f3640] border border-[#888] text-white text-[7px] leading-[9px] text-center">3</span>
      </div>
    </div>
  );
}

export default function App() {
  return (
    <div className="relative w-[1080px] h-[608px] overflow-hidden flex flex-col bg-white font-['Noto_Sans_CJK_SC','Liberation_Sans',sans-serif] blur-[0.4px]">
      <div className="h-[24px] shrink-0 flex items-center bg-white border-t border-[#666]">
        <svg className="ml-[10px]" width="12" height="13" viewBox="0 0 12 13"><rect x="1" y="0" width="8" height="7" fill="#2b3f9e" /><rect x="0" y="3" width="6" height="6" fill="#333" /><circle cx="8" cy="9" r="3.500" fill="#5ab85a" /></svg>
        <span className="ml-[5px] text-[11px] text-[#333] whitespace-nowrap font-['Liberation_Sans','Noto_Sans_CJK_SC',sans-serif]">103.45.105.196 - 远程桌面连接</span>
        <div className="ml-auto flex items-center gap-[25px] pr-[8px] text-[#222]">
          <span className="w-[9px] h-px bg-[#222]" />
          <span className="w-[10px] h-[10px] border border-[#222]" />
          <svg width="11" height="11" viewBox="0 0 11 11"><path d="M.5.5l10 10M10.500.5l-10 10" stroke="#222" /></svg>
        </div>
      </div>
      <div className="flex-1 min-h-0 flex">
        <div className="w-[5px] bg-[#a9a9a9]" />
        <div className="flex-1 min-w-0 flex flex-col bg-[#bcd8fb]">
          <div className="h-[23px] shrink-0 flex items-center pl-[42px] bg-gradient-to-b from-[#eef1f5] to-[#dfe6ee]">
            <QuickIcons />
            <span className="ml-[290px] text-[9.5px] text-[#a0a8b2] whitespace-nowrap">分析工程 1 - 科来网络分析系统 2020 技术交流版</span>
            <div className="ml-auto flex gap-[8px] pr-[2px] text-[#99a] text-[9px] leading-[9px]"><span>-</span><span>▫</span><span>×</span></div>
          </div>
          <div className="h-[23px] shrink-0 flex items-end pl-[43px] bg-[#bcd8fb]">
            <div className="w-[38px] h-[22px] mb-[-1px] rounded-t-[3px] bg-[#d6e6fa] border border-b-0 border-[#cde0f8] text-center text-[10px] leading-[20px] text-[#1c4f88]">分析</div>
            <div className="ml-[6px] w-[34px] h-[22px] text-center text-[10px] leading-[22px] text-[#1c4f88]">系统</div>
            <div className="ml-[8px] w-[34px] h-[22px] text-center text-[10px] leading-[22px] text-[#1c4f88]">工具</div>
            <div className="ml-[8px] w-[34px] h-[22px] text-center text-[10px] leading-[22px] text-[#1c4f88]">视图</div>
            <div className="ml-auto pr-[2px] flex items-center h-[22px] text-[10px] text-[#1c4f88]">
              <span className="w-[12px] h-[12px] rounded-full bg-[#4a82c8] border border-[#d8e6f8] text-white text-[8px] leading-[10px] text-center mr-[4px]">?</span>帮助 ▾
            </div>
          </div>
          <Ribbon />
          <div className="flex-1 min-h-0 flex">
            <LeftPanel />
            <div className="w-[4px] bg-[#6d9bdb]" />
            <RightPanel />
          </div>
        </div>
      </div>
      <Taskbar />
      <div className="absolute left-[8px] top-[28px]"><Orb /></div>
      <SettingsDialog />
      <FilterDialog />
      <Watermark />
      <RedArrows />
    </div>
  );
}
